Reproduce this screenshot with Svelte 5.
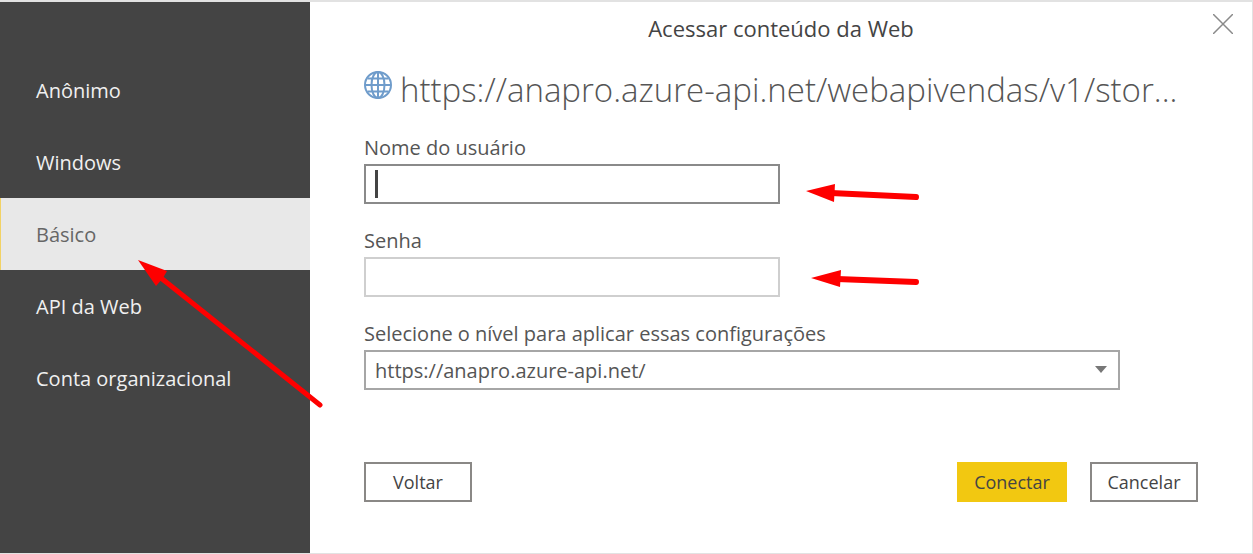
<script lang="ts">
  interface Method {
    id: string;
    label: string;
  }

  const methods: Method[] = [
    { id: 'anonymous', label: 'Anônimo' },
    { id: 'windows', label: 'Windows' },
    { id: 'basic', label: 'Básico' },
    { id: 'webapi', label: 'API da Web' },
    { id: 'org', label: 'Conta organizacional' },
  ];
  const levels = ['https://anapro.azure-api.net/'];

  let selected = $state('basic');
  let username = $state('');
  let password = $state('');
  let level = $state(levels[0]);
</script>

<div class="dialog">
  <nav class="sidebar">
    {#each methods as method}
      <button
        class="method"
        class:active={method.id === selected}
        onclick={() => (selected = method.id)}
      >
        {method.label}
        {#if method.id === 'basic'}
          <svg class="pointer" width="190" height="152" viewBox="0 0 190 152" aria-hidden="true">
            <path d="M20 15 L184 146" stroke="#fe0000" stroke-width="5" stroke-linecap="round" />
            <path d="M2 1 L31 12 L27 19 L20 27 Z" fill="#fe0000" />
          </svg>
        {/if}
      </button>
    {/each}
  </nav>

  <main class="panel">
    <header>
      <h1>Acessar conteúdo da Web</h1>
      <button class="close" aria-label="Fechar">
        <svg width="20" height="20" viewBox="0 0 20 20">
          <path d="M0 0 L20 20 M20 0 L0 20" stroke="#8a8a8a" stroke-width="1.5" />
        </svg>
      </button>
    </header>

    <div class="source">
      <svg class="globe" width="28" height="28" viewBox="0 0 28 28" fill="none" stroke="#6f9ccb" stroke-width="2">
        <circle cx="14" cy="14" r="13" />
        <ellipse cx="14" cy="14" rx="6.5" ry="13" />
        <path d="M14 1 V27 M1 14 H27 M3.5 7.5 H24.5 M3.5 20.5 H24.5" />
      </svg>
      <h2>https://anapro.azure-api.net/webapivendas/v1/stor...</h2>
    </div>

    <form onsubmit={(e) => e.preventDefault()}>
      <label for="username">Nome do usuário</label>
      <div class="field">
        <div class="box">
          <input id="username" class="focused" type="text" bind:value={username} />
          {#if !username}<span class="caret"></span>{/if}
        </div>
        <svg class="arrow" width="114" height="34" viewBox="0 0 114 34" aria-hidden="true">
          <path d="M25 26 L110 30" stroke="#fe0000" stroke-width="6" stroke-linecap="round" />
          <path d="M0 24 L29 17 L28 35 Z" fill="#fe0000" />
        </svg>
      </div>

      <label for="password">Senha</label>
      <div class="field">
        <div class="box">
          <input id="password" type="password" bind:value={password} />
        </div>
        <svg class="arrow" width="114" height="20" viewBox="0 0 114 20" aria-hidden="true">
          <path d="M31 12 L110 15" stroke="#fe0000" stroke-width="6" stroke-linecap="round" />
          <path d="M5 11 L35 3 L34 20 Z" fill="#fe0000" />
        </svg>
      </div>

      <label for="level">Selecione o nível para aplicar essas configurações</label>
      <div class="dropdown">
        <select id="level" bind:value={level}>
          {#each levels as item}
            <option value={item}>{item}</option>
          {/each}
        </select>
        <svg class="chevron" width="12" height="7" viewBox="0 0 12 7">
          <path d="M0 0 H12 L6 7 Z" fill="#777" />
        </svg>
      </div>

      <footer>
        <button class="action" type="button">Voltar</button>
        <div class="confirm">
          <button class="action primary" type="submit">Conectar</button>
          <button class="action" type="button">Cancelar</button>
        </div>
      </footer>
    </form>
  </main>
</div>

<style>
  :global(body) {
    background: white;
  }
  .dialog {
    display: flex;
    min-height: 100vh;
    box-sizing: border-box;
    border: solid #e2e2e2;
    border-width: 2px 1px 1px 0;
    font-family: 'Segoe UI', 'Open Sans', 'Noto Sans', sans-serif;
    font-size: 20px;
    color: #555;
  }
  button,
  input,
  select {
    box-sizing: border-box;
    font-family: inherit;
    font-size: inherit;
  }
  .sidebar {
    width: 310px;
    flex-shrink: 0;
    box-sizing: border-box;
    padding-top: 52px;
    background: #444;
  }
  .method {
    position: relative;
    display: block;
    width: 100%;
    height: 72px;
    padding: 0 0 0 35px;
    border: none;
    border-left: 1px solid transparent;
    background: none;
    color: #f0f0f0;
    text-align: left;
    cursor: pointer;
  }
  .method.active {
    border-left-color: #f2d264;
    background: #e8e8e8;
    color: #666;
  }
  .pointer {
    position: absolute;
    left: 135px;
    top: 61px;
    z-index: 1;
    pointer-events: none;
  }
  .panel {
    flex-grow: 1;
    min-width: 0;
    padding: 0 54px;
  }
  header {
    position: relative;
    height: 52px;
    display: flex;
    align-items: center;
    justify-content: center;
  }
  h1,
  h2 {
    margin: 0;
    font-weight: 400;
  }
  h1 {
    font-size: 22px;
    color: #444;
  }
  .close {
    position: absolute;
    right: -35px;
    top: 12px;
    padding: 0;
    border: none;
    background: none;
    cursor: pointer;
  }
  .close svg {
    display: block;
  }
  .source {
    display: flex;
    align-items: center;
    gap: 8px;
    height: 70px;
    margin-bottom: 10px;
  }
  .globe {
    flex-shrink: 0;
    margin-bottom: 8px;
  }
  h2 {
    font-size: 33px;
    font-weight: 300;
    white-space: nowrap;
  }
  label {
    display: block;
    line-height: 28px;
    margin-bottom: 2px;
  }
  .field {
    display: flex;
    align-items: center;
    gap: 26px;
    margin-bottom: 23px;
  }
  .box {
    position: relative;
    width: 416px;
  }
  input {
    display: block;
    width: 100%;
    height: 40px;
    padding: 0 10px;
    border: 2px solid #cfcfcf;
    background: white;
    color: #444;
  }
  input.focused {
    border-color: #8a8a8a;
  }
  input:focus {
    outline: none;
  }
  .caret {
    position: absolute;
    left: 11px;
    top: 6px;
    width: 3px;
    height: 28px;
    background: #444;
  }
  .arrow {
    flex-shrink: 0;
    overflow: visible;
  }
  .dropdown {
    position: relative;
    max-width: 756px;
  }
  select {
    display: block;
    width: 100%;
    height: 40px;
    padding: 0 40px 0 9px;
    border: 2px solid #a6a6a6;
    border-radius: 0;
    appearance: none;
    background: white;
    color: #555;
  }
  .chevron {
    position: absolute;
    right: 13px;
    top: 16px;
    pointer-events: none;
  }
  footer {
    display: flex;
    justify-content: space-between;
    margin-top: 72px;
  }
  .confirm {
    display: flex;
    gap: 23px;
  }
  .action {
    min-width: 108px;
    height: 40px;
    padding: 0 12px;
    border: 2px solid #8a8886;
    background: white;
    color: #444;
    font-size: 18px;
    cursor: pointer;
  }
  .primary {
    min-width: 110px;
    border-color: #f2c811;
    background: #f2c811;
  }
</style>
